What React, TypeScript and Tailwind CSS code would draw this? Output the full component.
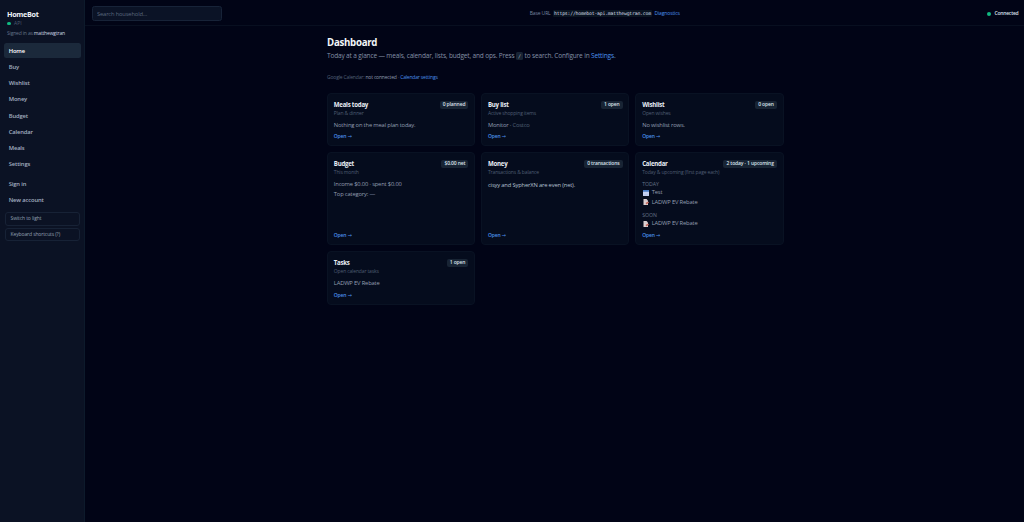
import type { ReactNode } from 'react';

const navItems = ['Home', 'Buy', 'Wishlist', 'Money', 'Budget', 'Calendar', 'Meals', 'Settings'];
const navCls = "flex items-center h-[14.2px] mb-[2.05px] rounded-[2.5px] px-[4.7px] pt-[1px] text-[5.8px] tracking-[-0.12px] font-semibold";
const sideBtnCls = "flex items-center h-[13.6px] rounded-[3px] border border-[#172236] px-[4.5px] text-[5px] tracking-[-0.11px] text-[#94a0b2]";
const linkCls = "text-[#4b91ec]";

function Card({ title, badge, sub, children }: { title: string; badge: string; sub: string; children: ReactNode }) {
  return (
    <section className="flex flex-col rounded-[4px] border border-[#091223] bg-[#050c1d] px-[5.8px] pt-[5.5px] pb-[5.3px]">
      <div className="flex items-center justify-between h-[10px]">
        <h2 className="text-[6.1px] leading-[10px] tracking-[-0.24px] font-bold text-[#e9eef5]">{title}</h2>
        <span className="flex items-center h-[8px] rounded-[2px] bg-[#182434] px-[3px] text-[5px] tracking-[-0.13px] font-semibold text-[#d8e0ea]">{badge}</span>
      </div>
      <p className="h-[6px] text-[5px] leading-[6px] tracking-[-0.14px] text-[#4f5d73]">{sub}</p>
      <div className="flex-1 pt-[5px] text-[5.8px] leading-[9.8px] tracking-[-0.17px] text-[#939fb2]">{children}</div>
      <a className={linkCls + " flex items-center gap-[1.3px] h-[7px] text-[5px] tracking-[-0.14px] font-semibold"}>
        Open <span className="font-['DejaVu_Sans',sans-serif] text-[5px] leading-[7px] font-normal">→</span>
      </a>
    </section>
  );
}

function CalendarIcon() {
  return (
    <svg viewBox="0 0 12 12" className="w-[6px] h-[6px]">
      <rect x="0" y="0" width="12" height="12" rx="1" fill="#c5d1f1" />
      <rect x="0" y="0" width="12" height="3.5" fill="#477bc4" />
      <path d="M2 9.5h8" stroke="#a6b8e6" />
    </svg>
  );
}

function MemoIcon() {
  return (
    <svg viewBox="0 0 12 12" className="w-[6px] h-[6px]">
      <path d="M1 0h6l3 3v9H1z" fill="#dcd0d2" />
      <path d="M3 3h4" stroke="#cbbcc2" />
      <path d="M5 8l5-3 2 2-5 4z" fill="#c4665a" />
    </svg>
  );
}

function EventRow({ icon, label }: { icon: ReactNode; label: string }) {
  return <div className="flex items-center gap-[2.5px] h-[9.7px] pl-[1px]">{icon}<span>{label}</span></div>;
}

export default function App() {
  return (
    <div className="flex h-[522px] w-[1024px] overflow-hidden bg-[#010416] font-['Open_Sans',sans-serif] whitespace-nowrap">
      <aside className="flex flex-col w-[85px] shrink-0 border-r border-[#0d1a2b] bg-[#0b1224] pl-[4px] pr-[3px] pt-[9px]">
        <div className="px-[3px]">
          <div className="text-[7.2px] leading-[10px] tracking-[-0.3px] font-bold text-[#f0f4f9]">HomeBot</div>
          <div className="flex items-center gap-[3.5px] h-[9px] text-[5px] text-[#4c5a70]">
            <span className="w-[3.5px] h-[3.5px] rounded-full bg-[#10b981]" />API
          </div>
          <div className="text-[5px] leading-[10px] tracking-[-0.17px] text-[#66748a]">Signed in as <span className="font-medium text-[#d0d9e4]">matthewgtran</span></div>
        </div>
        <nav className="mt-[5.4px]">
          {navItems.map((item, i) => (
            <a key={item} className={navCls + (i === 0 ? " bg-[#1b293b] text-white" : " text-[#a3afc0]")}>{item}</a>
          ))}
        </nav>
        <div className="mt-[3.5px]">
          <a className={navCls + " text-[#a3afc0]"}>Sign in</a>
          <a className={navCls + " text-[#a3afc0]"}>New account</a>
        </div>
        <div className="flex flex-col gap-[1.5px] mt-[3.2px] px-[1px]">
          <button className={sideBtnCls}>Switch to light</button>
          <button className={sideBtnCls}>Keyboard shortcuts (?)</button>
        </div>
      </aside>

      <div className="flex-1">
        <header className="flex items-center justify-between h-[26px] border-b border-[#080f20] pl-[7px] pr-[5.5px] pt-[2px]">
          <input placeholder="Search household…" className="w-[130px] h-[15px] rounded-[2.5px] border border-[#172338] bg-[#0b1326] px-[4px] pt-[1px] text-[5.8px] tracking-[-0.17px] placeholder:text-[#5b687d]" />
          <div className="flex items-center gap-[2px] text-[5px] tracking-[-0.12px] text-[#7785a0]">
            <span>Base URL</span>
            <code className="rounded-[1px] bg-[#0a1421] px-[1.5px] leading-[7px] font-['DejaVu_Sans_Mono',monospace] text-[4.8px] tracking-[-0.2px] text-[#d5dde7]">https://homebot-api.matthewgtran.com</code>
            <a className={linkCls}>Diagnostics</a>
          </div>
          <div className="flex items-center gap-[3px] text-[5px] tracking-[-0.21px] font-semibold text-[#d8e0ea]">
            <span className="w-[4px] h-[4px] rounded-full bg-[#10b981]" />Connected
          </div>
        </header>

        <main className="ml-[242px] w-[456.6px] pt-[11px]">
          <h1 className="text-[9.7px] leading-[12px] tracking-[-0.28px] font-bold text-[#f3f6fa]">Dashboard</h1>
          <p className="mt-[2px] text-[6.5px] leading-[10px] tracking-[-0.15px] text-[#8491a6]">
            Today at a glance — meals, calendar, lists, budget, and ops. Press <kbd className="rounded-[1.5px] bg-[#182434] px-[2px] py-[1px] font-['DejaVu_Sans_Mono',monospace] text-[5.2px] text-[#a3afbf]">/</kbd> to search. Configure in <a className={linkCls}>Settings</a>.
          </p>
          <p className="mt-[11px] text-[5px] leading-[10px] tracking-[-0.17px] text-[#536177]">
            Google Calendar: <span className="text-[#8f9caf]">not connected</span> · <a className={linkCls}>Calendar settings</a>
          </p>

          <div className="grid grid-cols-3 gap-[6px] mt-[11px] grid-rows-[53.4px_92.8px_54px]">
            <Card title="Meals today" badge="0 planned" sub="Plan & dinner">Nothing on the meal plan today.</Card>
            <Card title="Buy list" badge="1 open" sub="Active shopping items">Monitor · <span className="text-[#536177]">Costco</span></Card>
            <Card title="Wishlist" badge="0 open" sub="Open wishes">No wishlist rows.</Card>
            <Card title="Budget" badge="$0.00 net" sub="This month">
              <div>Income $0.00 · spent $0.00</div>
              <div>Top category: —</div>
            </Card>
            <Card title="Money" badge="0 transactions" sub="Transactions & balance">
              <div className="pt-[1px] text-[#b4c0d0]">cisyy and SypherXN are even (net).</div>
            </Card>
            <Card title="Calendar" badge="2 today · 1 upcoming" sub="Today & upcoming (first page each)">
              <div className="text-[5.2px] leading-[8px] tracking-normal text-[#66748a]">TODAY</div>
              <EventRow icon={<CalendarIcon />} label="Test" />
              <EventRow icon={<MemoIcon />} label="LADWP EV Rebate" />
              <div className="mt-[3.4px] text-[5.2px] leading-[8px] tracking-normal text-[#66748a]">SOON</div>
              <EventRow icon={<MemoIcon />} label="LADWP EV Rebate" />
            </Card>
            <Card title="Tasks" badge="1 open" sub="Open calendar tasks">LADWP EV Rebate</Card>
          </div>
        </main>
      </div>
    </div>
  );
}
